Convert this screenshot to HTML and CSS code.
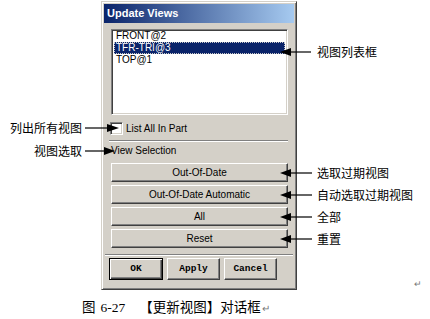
FILE: index.html
```html
<!DOCTYPE html>
<html>
<head>
<meta charset="utf-8">
<link rel="stylesheet" href="styles.css">
</head>
<body>
<div class="page">
  <div class="stage">
    <div class="dialog">
      <div class="titlebar">Update Views</div>
      <div class="dlg-body">
        <div class="listbox">
          <div class="item">FRONT@2</div>
          <div class="item selected">TFR-TRI@3</div>
          <div class="item">TOP@1</div>
        </div>
        <div class="check-row">
          <span class="checkbox"></span>
          <span class="check-label">List All In Part</span>
        </div>
        <div class="sep"></div>
        <div class="group-label">View Selection</div>
        <div class="btn-stack">
          <div class="btn">Out-Of-Date</div>
          <div class="btn">Out-Of-Date Automatic</div>
          <div class="btn">All</div>
          <div class="btn">Reset</div>
        </div>
        <div class="sep sep-wide"></div>
        <div class="btn-row">
          <div class="btn btn-small btn-default">OK</div>
          <div class="btn btn-small">Apply</div>
          <div class="btn btn-small">Cancel</div>
        </div>
      </div>
    </div>
    <span class="para-mark">↵</span>
  </div>
  <div class="caption"><span class="fig-no">图 <span class="fig-num">6-27</span></span><span class="fig-title">【更新视图】对话框</span><span class="para-mark2">↵</span></div>

  <svg class="callouts" width="430" height="319" viewBox="0 0 430 319">
    <g stroke="#000" stroke-width="1.2" fill="none">
      <line x1="289" y1="52" x2="311" y2="52"/>
      <line x1="289" y1="173" x2="312" y2="173"/>
      <line x1="289" y1="195" x2="312" y2="195"/>
      <line x1="289" y1="217" x2="312" y2="217"/>
      <line x1="289" y1="239" x2="312" y2="239"/>
      <line x1="85" y1="128" x2="109" y2="128"/>
      <line x1="85" y1="151" x2="105" y2="151"/>
    </g>
    <g fill="#000">
      <polygon points="280,52 291,48 291,56"/>
      <polygon points="280,173 291,169 291,177"/>
      <polygon points="280,195 291,191 291,199"/>
      <polygon points="280,217 291,213 291,221"/>
      <polygon points="280,239 291,235 291,243"/>
      <polygon points="119,128 107,124 107,132"/>
      <polygon points="115,151 104,147 104,155"/>
    </g>
  </svg>
  <div class="note note-right" style="top:45px">视图列表框</div>
  <div class="note note-right" style="top:166px">选取过期视图</div>
  <div class="note note-right" style="top:188px">自动选取过期视图</div>
  <div class="note note-right" style="top:210px">全部</div>
  <div class="note note-right" style="top:232px">重置</div>
  <div class="note note-left" style="top:121px">列出所有视图</div>
  <div class="note note-left" style="top:144px">视图选取</div>
</div>
</body>
</html>
```

FILE: styles.css
```css
html, body {
  margin: 0;
  padding: 0;
  background: #fff;
}
.page {
  position: relative;
  width: 430px;
  height: 319px;
  overflow: hidden;
  font-family: "Liberation Sans", Arial, sans-serif;
}
.stage {
  display: flex;
  padding: 1px 8px 0 101px;
}
.dialog {
  box-sizing: border-box;
  width: 196px;
  height: 289px;
  background: #d4d0c8;
  border: 1px solid;
  border-color: #d4d0c8 #404040 #404040 #d4d0c8;
  box-shadow: inset 1px 1px #ffffff, inset -1px -1px #808080;
  padding: 2px;
  display: flex;
  flex-direction: column;
}
.titlebar {
  height: 19px;
  line-height: 19px;
  padding-left: 3px;
  color: #fff;
  font-weight: bold;
  font-size: 11px;
  background: linear-gradient(to right, #0a246a, #a6caf0);
}
.dlg-body {
  padding: 6px 6px 0 7px;
  display: flex;
  flex-direction: column;
  font-size: 10px;
  color: #000;
}
.listbox {
  box-sizing: border-box;
  height: 86px;
  background: #fff;
  border: 1px solid;
  border-color: #808080 #ffffff #ffffff #808080;
  box-shadow: inset 1px 1px #404040, inset -1px -1px #d4d0c8;
  padding: 0 2px;
}
.item {
  height: 12px;
  line-height: 12px;
  padding-left: 2px;
  white-space: nowrap;
}
.item.selected {
  background: #0a246a;
  color: #fff;
  outline: 1px dotted #c8c8c8;
  outline-offset: -1px;
}
.check-row {
  display: flex;
  align-items: center;
  margin-top: 7px;
  height: 13px;
}
.checkbox {
  box-sizing: border-box;
  width: 13px;
  height: 13px;
  margin-left: -1px;
  background: #fff;
  border: 1px solid;
  border-color: #808080 #ffffff #ffffff #808080;
  box-shadow: inset 1px 1px #404040, inset -1px -1px #d4d0c8;
}
.check-label {
  margin-left: 3px;
  line-height: 13px;
}
.sep {
  height: 0;
  border-top: 1px solid #808080;
  border-bottom: 1px solid #ffffff;
  margin: 5px 0 0 -2px;
}
.group-label {
  margin-top: 3px;
  line-height: 12px;
}
.btn-stack {
  display: flex;
  flex-direction: column;
  gap: 3px;
  margin-top: 6px;
}
.btn {
  box-sizing: border-box;
  height: 19px;
  line-height: 17px;
  text-align: center;
  background: #d4d0c8;
  border: 1px solid;
  border-color: #ffffff #404040 #404040 #ffffff;
  box-shadow: inset -1px -1px #808080;
  font-size: 10px;
}
.sep-wide {
  margin: 6px -5px 0 -6px;
}
.btn-row {
  display: flex;
  gap: 4px;
  margin: 2px 0 0 -2px;
}
.btn-small {
  width: 53px;
  height: 22px;
  line-height: 20px;
  font-family: "Liberation Mono", "Courier New", monospace;
  font-weight: bold;
  font-size: 9.5px;
}
.btn-default {
  width: 54px;
  border: 1px solid #000;
  box-shadow: inset 1px 1px #ffffff, inset -1px -1px #404040, inset -2px -2px #808080;
}
.para-mark {
  margin-left: auto;
  align-self: flex-end;
  font-size: 9px;
  line-height: 9px;
  color: #777;
  margin-bottom: 1px;
}
.caption {
  margin: 8px 0 0 82px;
  height: 17px;
  line-height: 17px;
  font-family: "Noto Sans CJK SC", "Liberation Serif", serif;
  font-size: 13.5px;
  color: #000;
  white-space: nowrap;
}
.fig-num {
  font-family: "Liberation Serif", "Times New Roman", serif;
  margin-left: 2px;
}
.fig-title {
  margin-left: 14px;
}
.para-mark2 {
  font-size: 10px;
  color: #777;
  margin-left: 1px;
}
.callouts {
  position: absolute;
  left: 0;
  top: 0;
  pointer-events: none;
}
.note {
  position: absolute;
  font-family: "Noto Sans CJK SC", sans-serif;
  font-size: 12px;
  line-height: 14px;
  color: #000;
  white-space: nowrap;
}
.note-right {
  left: 317px;
}
.note-left {
  right: 348px;
  text-align: right;
}
```
